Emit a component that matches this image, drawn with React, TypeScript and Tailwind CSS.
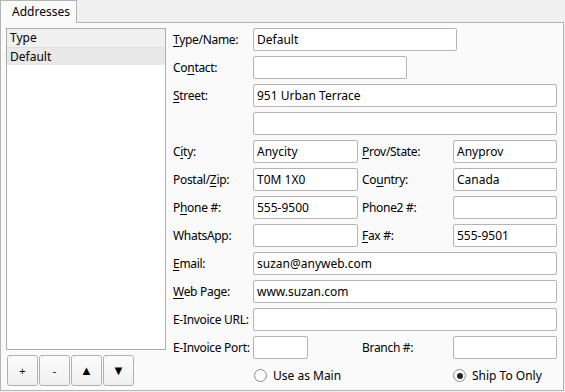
import React from "react";

const font = { fontFamily: '"Noto Sans", "Liberation Sans", sans-serif' };

// label with an underlined mnemonic letter
const Label = ({ text, u, className = "w-[80px]" }: { text: string; u?: number; className?: string }) => (
  <span className={`${className} shrink-0 whitespace-nowrap text-[12px] tracking-[-0.3px] text-black`}>
    {u === undefined ? (
      text
    ) : (
      <>
        {text.slice(0, u)}
        <span className="underline underline-offset-2">{text[u]}</span>
        {text.slice(u + 1)}
      </>
    )}
  </span>
);

const Field = ({ value = "", width }: { value?: string; width: string }) => (
  <div
    className={`${width} h-[23px] shrink-0 rounded-[2px] border border-[#b4b4b4] bg-white pl-[3px] text-[12px] leading-[21px] text-black`}
  >
    {value}
  </div>
);

const Row = ({ children }: { children: React.ReactNode }) => (
  <div className="flex h-[23px] items-center">{children}</div>
);

const PairRow = ({
  l1,
  u1,
  v1,
  l2,
  u2,
  v2,
}: {
  l1: string;
  u1?: number;
  v1?: string;
  l2: string;
  u2?: number;
  v2?: string;
}) => (
  <Row>
    <Label text={l1} u={u1} />
    <Field value={v1} width="w-[105px]" />
    <Label text={l2} u={u2} className="ml-[4px] w-[91px]" />
    <Field value={v2} width="w-[104px]" />
  </Row>
);

const Radio = ({ checked, label }: { checked?: boolean; label: string }) => (
  <div className="flex items-center">
    <span className="flex h-[13px] w-[13px] items-center justify-center rounded-full border border-[#8a8a8a] bg-white">
      {checked && <span className="h-[6px] w-[6px] rounded-full bg-[#222]" />}
    </span>
    <span className="ml-[6px] text-[12px] text-black">{label}</span>
  </div>
);

const ToolButton = ({ children }: { children: React.ReactNode }) => (
  <button className="flex h-[31px] w-[31px] items-center justify-center rounded-[3px] border border-[#b0b0b0] bg-gradient-to-b from-[#fcfcfc] to-[#f0f0f0] text-[11px] leading-none text-black">
    {children}
  </button>
);

export default function App() {
  return (
    <div className="flex h-[392px] w-[565px] flex-col bg-[#f0f0f0]" style={font}>
      <div className="flex h-[22px]">
        <div className="relative z-10 -mb-px flex w-[77px] items-center border-x border-t border-[#b4b4b4] bg-[#fafafa] pl-[11px] text-[12px] text-black">
          Addresses
        </div>
      </div>
      <div className="flex h-[369px] w-[564px] border border-[#b4b4b4] bg-[#fafafa] pl-[5px] pt-[5px]">
        {/* list + buttons */}
        <div className="flex w-[160px] flex-col">
          <div className="flex h-[322px] flex-col border border-[#adadad] bg-white">
            <div className="flex h-[19px] items-center border-b border-[#e0e0e0] bg-[#f0f0f0] pl-[3px] text-[12px] text-black">
              Type
            </div>
            <div className="flex h-[17px] items-center bg-[#e8e8e8] pl-[3px] text-[12px] text-black">Default</div>
          </div>
          <div className="mt-[5px] flex gap-[1px] pl-[1px]">
            <ToolButton>+</ToolButton>
            <ToolButton>-</ToolButton>
            <ToolButton>
              <span className="text-[13px]">▲</span>
            </ToolButton>
            <ToolButton>
              <span className="text-[13px]">▼</span>
            </ToolButton>
          </div>
        </div>

        {/* form */}
        <div className="ml-[7px] flex flex-col gap-[5px]">
          <Row>
            <Label text="Type/Name:" u={0} />
            <Field value="Default" width="w-[204px]" />
          </Row>
          <Row>
            <Label text="Contact:" u={2} />
            <Field width="w-[154px]" />
          </Row>
          <Row>
            <Label text="Street:" u={0} />
            <Field value="951 Urban Terrace" width="w-[304px]" />
          </Row>
          <Row>
            <Label text="" />
            <Field width="w-[304px]" />
          </Row>
          <PairRow l1="City:" u1={1} v1="Anycity" l2="Prov/State:" u2={0} v2="Anyprov" />
          <PairRow l1="Postal/Zip:" u1={7} v1="T0M 1X0" l2="Country:" u2={2} v2="Canada" />
          <PairRow l1="Phone #:" u1={1} v1="555-9500" l2="Phone2 #:" />
          <PairRow l1="WhatsApp:" l2="Fax #:" u2={0} v2="555-9501" />
          <Row>
            <Label text="Email:" u={0} />
            <Field value="suzan@anyweb.com" width="w-[304px]" />
          </Row>
          <Row>
            <Label text="Web Page:" u={0} />
            <Field value="www.suzan.com" width="w-[304px]" />
          </Row>
          <Row>
            <Label text="E-Invoice URL:" />
            <Field width="w-[304px]" />
          </Row>
          <Row>
            <Label text="E-Invoice Port:" />
            <Field width="w-[55px]" />
            <Label text="Branch #:" className="ml-[54px] w-[91px]" />
            <Field width="w-[104px]" />
          </Row>
          <div className="flex h-[23px] items-center pl-[81px]">
            <div className="w-[199px]">
              <Radio label="Use as Main" />
            </div>
            <Radio checked label="Ship To Only" />
          </div>
        </div>
      </div>
    </div>
  );
}
